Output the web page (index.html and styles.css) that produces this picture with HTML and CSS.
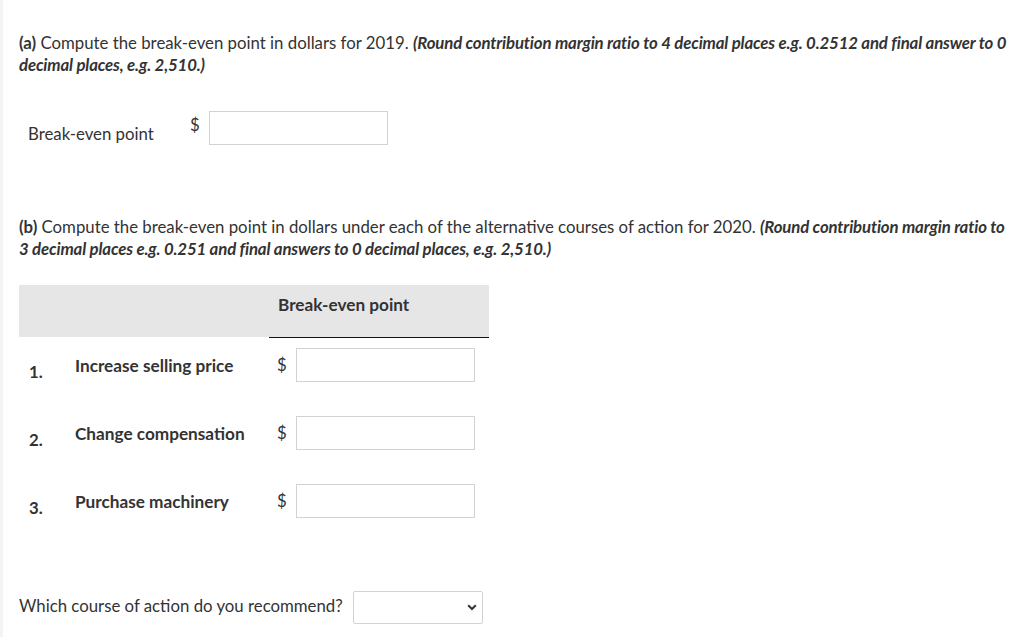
FILE: index.html
```html
<!DOCTYPE html>
<html lang="en">
<head>
<meta charset="utf-8">
<title>Break-even point</title>
<link rel="stylesheet" href="styles.css">
</head>
<body>
<div class="page">
  <p class="question q-a"><b>(a)</b> Compute the break-even point in dollars for 2019. <em>(Round contribution margin ratio to 4 decimal places e.g. 0.2512 and final answer to 0 decimal places, e.g. 2,510.)</em></p>

  <div class="single-row">
    <span class="single-label">Break-even point</span>
    <span class="dollar">$</span>
    <input class="field" type="text" aria-label="Break-even point">
  </div>

  <p class="question q-b"><b>(b)</b> Compute the break-even point in dollars under each of the alternative courses of action for 2020. <em>(Round contribution margin ratio to 3 decimal places e.g. 0.251 and final answers to 0 decimal places, e.g. 2,510.)</em></p>

  <div class="table">
    <div class="thead">
      <div class="th-blank"></div>
      <div class="th">Break-even point</div>
    </div>
    <div class="trow">
      <span class="num">1.</span>
      <span class="label">Increase selling price</span>
      <span class="dollar row-dollar">$</span>
      <input class="field row-field" type="text" aria-label="Increase selling price">
    </div>
    <div class="trow">
      <span class="num">2.</span>
      <span class="label">Change compensation</span>
      <span class="dollar row-dollar">$</span>
      <input class="field row-field" type="text" aria-label="Change compensation">
    </div>
    <div class="trow">
      <span class="num">3.</span>
      <span class="label">Purchase machinery</span>
      <span class="dollar row-dollar">$</span>
      <input class="field row-field" type="text" aria-label="Purchase machinery">
    </div>
  </div>

  <div class="recommend">
    <span class="rec-label">Which course of action do you recommend?</span>
    <div class="select-wrap">
      <select class="select" aria-label="Recommendation">
        <option></option>
      </select>
      <svg class="chev" width="10" height="7" viewBox="0 0 10 7"><path d="M1.2 1.3 L5 5 L8.8 1.3" fill="none" stroke="#333" stroke-width="2"/></svg>
    </div>
  </div>
</div>
</body>
</html>
```

FILE: styles.css
```css
html, body {
  margin: 0;
  padding: 0;
  background: #fff;
}
body {
  font-family: Lato, "Open Sans", sans-serif;
  font-size: 16.8px;
  line-height: 22px;
  color: #333;
}
.page {
  border-left: 3px solid #f4f4f4;
  padding: 32px 10px 0 16px;
  min-height: 605px;
}
.question {
  margin: 0;
  width: 995px;
}
.question b {
  font-weight: 700;
}
.question em {
  font-weight: 700;
  font-style: italic;
  letter-spacing: -0.15px;
}
.single-row {
  display: flex;
  align-items: flex-start;
  margin-top: 35px;
  height: 34px;
}
.single-label {
  width: 162px;
  margin-left: 9px;
  margin-top: 12px;
}
.dollar {
  width: 19px;
  margin-top: 3px;
}
.field {
  box-sizing: border-box;
  width: 179px;
  height: 34px;
  border: 1px solid #d2d2d2;
  margin: 0;
  padding: 0 6px;
  font: inherit;
  background: #fff;
}
.q-b {
  margin-top: 71px;
}
.table {
  margin-top: 25px;
  width: 470px;
}
.thead {
  display: flex;
  height: 52px;
  background: #e6e6e6;
}
.th-blank {
  width: 250px;
}
.th {
  flex: 1;
  box-sizing: border-box;
  padding: 9px 0 0 9px;
  font-weight: 700;
  font-size: 17.2px;
  border-bottom: 1px solid #111;
  margin-bottom: -1px;
}
.trow {
  display: flex;
  align-items: flex-start;
  height: 68px;
  font-weight: 700;
  font-size: 17.2px;
}
.num {
  width: 46px;
  margin-left: 10px;
  margin-top: 24px;
  font-size: 16.8px;
}
.label {
  width: 202px;
  margin-top: 18px;
}
.row-dollar {
  font-weight: 400;
  font-size: 16.8px;
  margin-top: 17px;
}
.row-field {
  margin-top: 11px;
}
.recommend {
  display: flex;
  align-items: flex-start;
  margin-top: 50px;
}
.rec-label {
  width: 334px;
  margin-top: 4px;
}
.select-wrap {
  position: relative;
  width: 130px;
  height: 33px;
}
.select {
  appearance: none;
  -webkit-appearance: none;
  box-sizing: border-box;
  width: 130px;
  height: 33px;
  border: 1px solid #d2d2d2;
  border-radius: 2px;
  background: #fff;
  margin: 0;
  font: inherit;
}
.chev {
  position: absolute;
  right: 6px;
  top: 13px;
  pointer-events: none;
}
```
